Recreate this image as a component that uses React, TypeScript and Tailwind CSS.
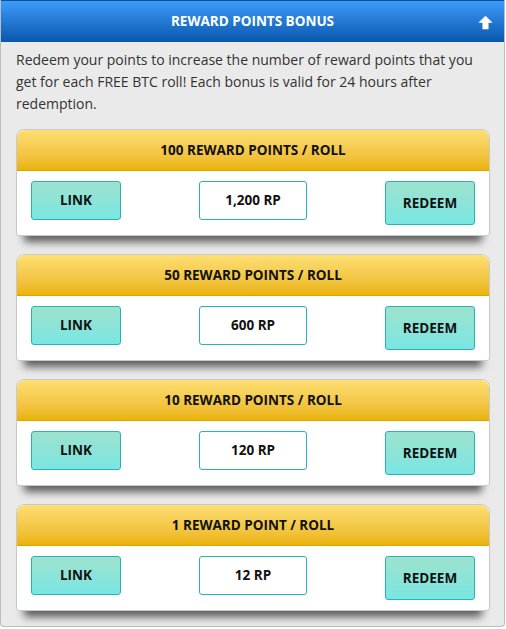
const bonuses = [
  { title: '100 REWARD POINTS / ROLL', cost: '1,200 RP' },
  { title: '50 REWARD POINTS / ROLL', cost: '600 RP' },
  { title: '10 REWARD POINTS / ROLL', cost: '120 RP' },
  { title: '1 REWARD POINT / ROLL', cost: '12 RP' },
];

function BonusCard({ title, cost }: { title: string; cost: string }) {
  return (
    <div className="rounded-t-lg rounded-b-[3px] border border-[#c9c9c9] bg-white shadow-[0_14px_8px_-8px_rgba(0,0,0,0.6)]">
      <div className="h-[41px] flex items-center justify-center rounded-t-lg border-b border-[#dba400] bg-gradient-to-b from-[#fddf72] to-[#ebb400] text-[13.5px] font-bold text-[#111]">
        {title}
      </div>
      <div className="flex items-start justify-between px-[14px] pt-[10px] pb-[10px]">
        <button className="w-[90px] h-[39px] rounded-[3px] border border-[#27b3b8] bg-gradient-to-b from-[#9de2cd] to-[#79e6e3] text-[13.5px] font-bold text-[#111]">
          LINK
        </button>
        <div className="w-[108px] h-[39px] flex items-center justify-center rounded-[3px] border border-[#27b3b8] bg-white text-[13.5px] font-bold text-[#111]">
          {cost}
        </div>
        <button className="w-[90px] h-[44px] rounded-[3px] border border-[#27b3b8] bg-gradient-to-b from-[#9de2cd] to-[#79e6e3] text-[13.5px] font-bold text-[#111]">
          REDEEM
        </button>
      </div>
    </div>
  );
}

export default function App() {
  return (
    <div className="w-[506px] h-[629px] bg-white" style={{ fontFamily: '"Open Sans", sans-serif' }}>
      <div className="w-[505px] h-[627px] flex flex-col rounded-b-[4px] border-x border-b border-[#bdbdbd] bg-[#eaeaea]">
        <div className="h-[42px] flex items-center justify-center relative border-t border-[#0b4f9a] bg-gradient-to-b from-[#3d9cfa] to-[#0757ad] text-white text-[13.5px] font-bold">
          REWARD POINTS BONUS
          <svg className="absolute right-[11px] top-[14px]" width="15" height="15" viewBox="0 0 15 15">
            <path d="M7.5 1 L14 7.5 L10.2 7.5 L10.2 14 L4.8 14 L4.8 7.5 L1 7.5 Z" fill="white" stroke="white" strokeWidth="0.6" strokeLinejoin="round" />
          </svg>
        </div>
        <p className="px-[15px] pt-[7px] text-[14px] leading-[22px] text-[#333]">
          Redeem your points to increase the number of reward points that you get for each FREE BTC roll! Each bonus is valid for 24 hours after redemption.
        </p>
        <div className="flex flex-col gap-[18px] pl-[15px] pr-[14px] pt-[14px]">
          {bonuses.map((b) => (
            <BonusCard key={b.title} title={b.title} cost={b.cost} />
          ))}
        </div>
      </div>
    </div>
  );
}
